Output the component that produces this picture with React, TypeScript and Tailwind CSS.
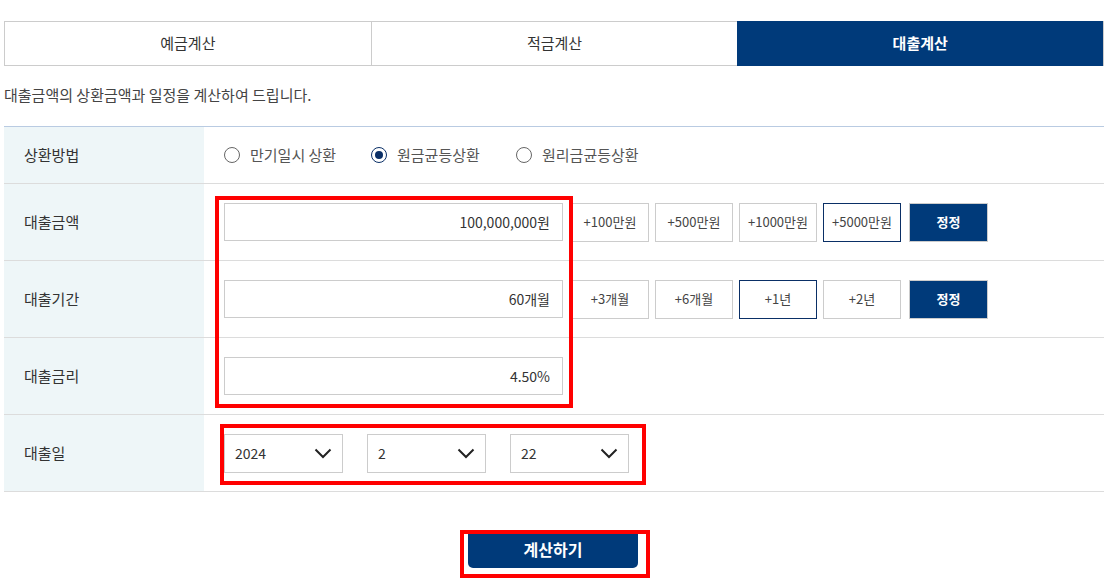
import React from 'react'

const font = { fontFamily: '"Noto Sans CJK KR", "Noto Sans", sans-serif' }

const Chevron = () => (
  <svg width="18" height="11" viewBox="0 0 18 11" fill="none">
    <path d="M1.5 1.5 L9 9 L16.5 1.5" stroke="#222" strokeWidth="2" />
  </svg>
)

const Radio = ({ checked, label }: { checked?: boolean; label: string }) => (
  <label className="flex items-center gap-[10px] text-[15px] text-[#555]">
    <span
      className={`w-[16px] h-[16px] rounded-full border-[1.5px] flex items-center justify-center ${
        checked ? 'border-[#0a2f66]' : 'border-[#666]'
      }`}
    >
      {checked && <span className="w-[8px] h-[8px] rounded-full bg-[#0a2f66]" />}
    </span>
    {label}
  </label>
)

const Row = ({ label, tall = true, children }: { label: string; tall?: boolean; children: React.ReactNode }) => (
  <div className={`flex border-b border-[#dcdcdc] ${tall ? 'h-[77px]' : 'h-[57px]'}`}>
    <div className="w-[200px] bg-[#eef6f8] flex items-center pl-[20px] text-[15px] text-[#333]">{label}</div>
    <div className="flex-1 flex items-center pl-[20px]">{children}</div>
  </div>
)

const Field = ({ value }: { value: string }) => (
  <div className="w-[339px] h-[38px] border border-[#ccc] flex items-center justify-end pr-[12px] text-[14px] text-[#333]">
    {value}
  </div>
)

const AddBtn = ({ text, active }: { text: string; active?: boolean }) => (
  <button
    className={`w-[78px] h-[39px] border text-[13px] text-[#444] bg-white ${
      active ? 'border-[#0a2f66]' : 'border-[#ccc]'
    }`}
  >
    {text}
  </button>
)

const FixBtn = () => (
  <button className="w-[79px] h-[39px] ml-[2px] bg-[#003a7a] border border-[#ccc] text-white text-[13px] font-bold">정정</button>
)

const Select = ({ value }: { value: string }) => (
  <div className="w-[119px] h-[39px] border border-[#ccc] flex items-center justify-between pl-[10px] pr-[10px] text-[14px] text-[#333]">
    <span>{value}</span>
    <Chevron />
  </div>
)

export default function App() {
  return (
    <div className="relative w-[1106px] h-[582px] bg-white overflow-hidden" style={font}>
      <div className="pl-[4px] pr-[2px] pt-[21px]">
        <div className="flex h-[45px] border border-[#ccc]">
          <div className="flex-1 flex items-center justify-center text-[15px] text-[#333] border-r border-[#ccc]">예금계산</div>
          <div className="flex-1 flex items-center justify-center text-[15px] text-[#333]">적금계산</div>
          <div className="flex-1 flex items-center justify-center text-[15px] text-white font-bold bg-[#003a7a] -my-px">대출계산</div>
        </div>
        <p className="mt-[18px] text-[15px] text-[#444] leading-[22px]">대출금액의 상환금액과 일정을 계산하여 드립니다.</p>
        <div className="mt-[20px] border-t border-[#b9cbe2]">
          <Row label="상환방법" tall={false}>
            <div className="flex items-center">
              <div className="w-[147px]"><Radio label="만기일시 상환" /></div>
              <div className="w-[145px]"><Radio checked label="원금균등상환" /></div>
              <Radio label="원리금균등상환" />
            </div>
          </Row>
          <Row label="대출금액">
            <Field value="100,000,000원" />
            <div className="flex gap-[6px] ml-[8px]">
              <AddBtn text="+100만원" />
              <AddBtn text="+500만원" />
              <AddBtn text="+1000만원" />
              <AddBtn text="+5000만원" active />
              <FixBtn />
            </div>
          </Row>
          <Row label="대출기간">
            <Field value="60개월" />
            <div className="flex gap-[6px] ml-[8px]">
              <AddBtn text="+3개월" />
              <AddBtn text="+6개월" />
              <AddBtn text="+1년" active />
              <AddBtn text="+2년" />
              <FixBtn />
            </div>
          </Row>
          <Row label="대출금리">
            <Field value="4.50%" />
          </Row>
          <Row label="대출일">
            <div className="flex gap-[24px]">
              <Select value="2024" />
              <Select value="2" />
              <Select value="22" />
            </div>
          </Row>
        </div>
        <div className="flex justify-center mt-[38px] pr-[2px]">
          <button className="w-[170px] h-[38px] bg-[#003a7a] rounded-b-[5px] text-white text-[16px] font-bold">계산하기</button>
        </div>
      </div>

      {/* red annotation boxes */}
      <div className="absolute left-[215px] top-[196px] w-[358px] h-[212px] border-4 border-[#ff0000]" />
      <div className="absolute left-[220px] top-[424px] w-[426px] h-[61px] border-4 border-[#ff0000]" />
      <div className="absolute left-[460px] top-[530px] w-[190px] h-[48px] border-4 border-[#ff0000]" />
    </div>
  )
}
